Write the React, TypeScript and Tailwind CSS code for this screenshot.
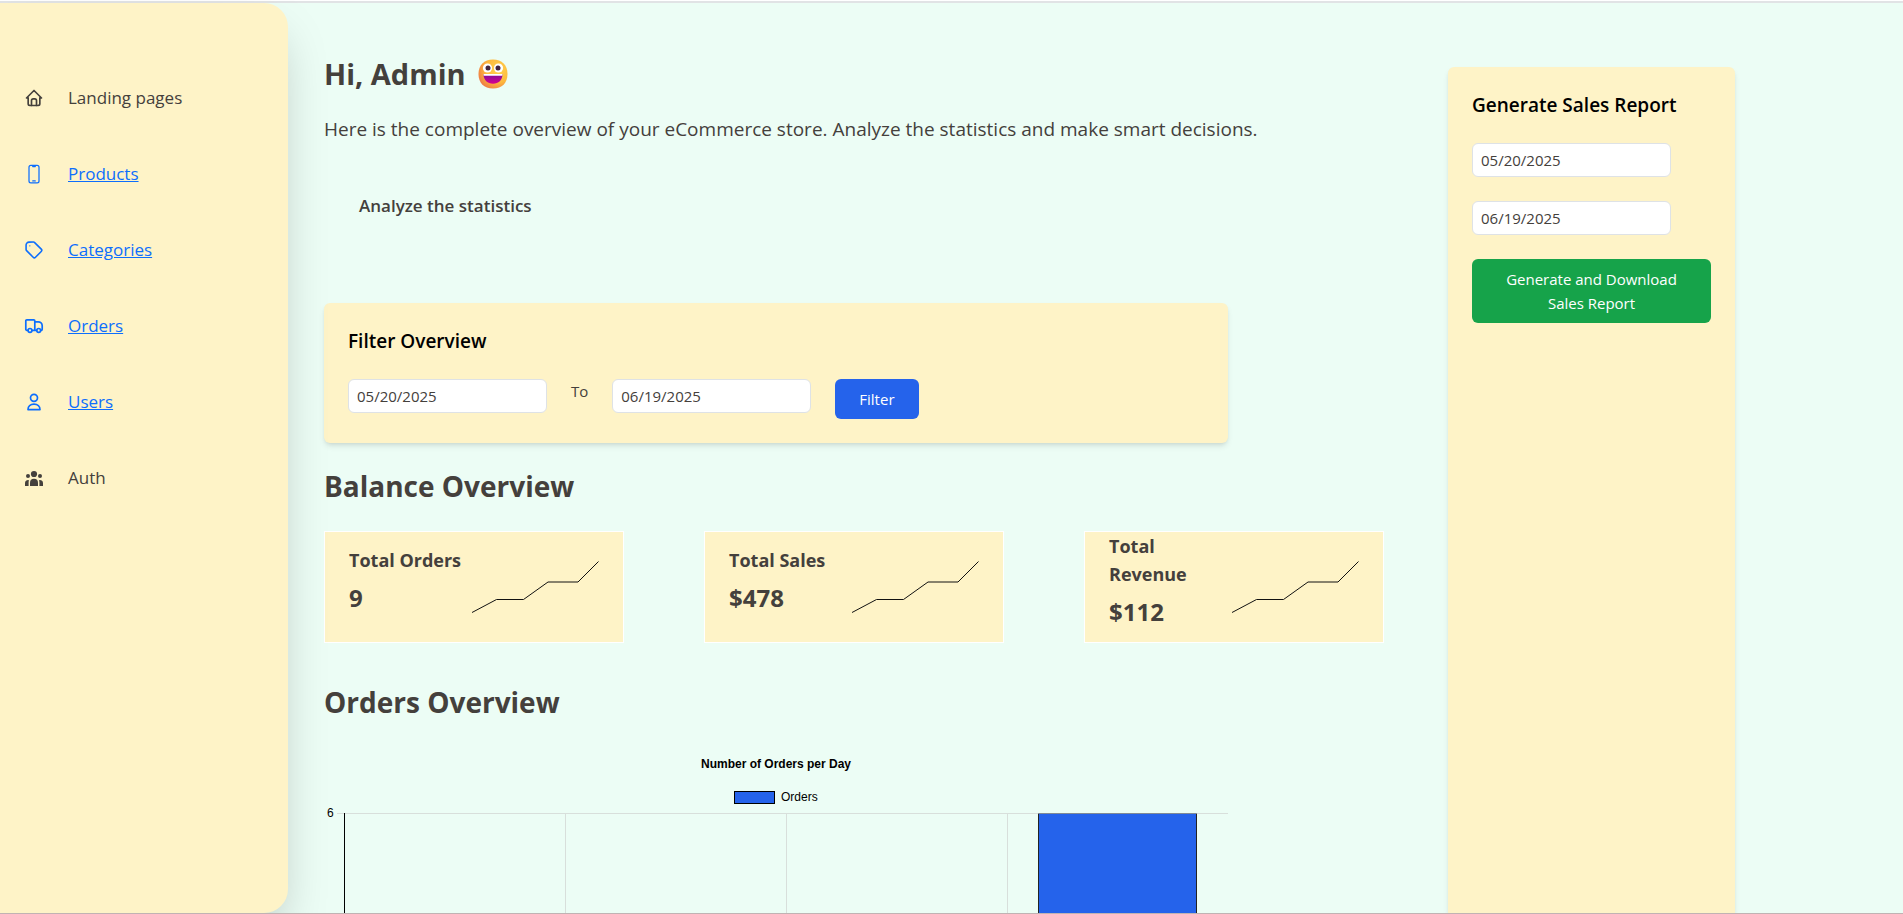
import type { ReactNode } from "react";
import { HiOutlineDevicePhoneMobile } from "react-icons/hi2";
import { TbHome } from "react-icons/tb";

const stroke = {
  fill: "none",
  stroke: "currentColor",
  strokeWidth: 1.5,
  strokeLinecap: "round",
  strokeLinejoin: "round",
} as const;

function TagIcon() {
  return (
    <svg viewBox="0 0 24 24" className="size-5" {...stroke} strokeWidth={1.9} aria-hidden="true">
      <path d="M2.500 6v5.400a2 2 0 0 0 .6 1.400l7.900 7.900a2 2 0 0 0 2.800 0l6.900-6.900a2 2 0 0 0 0-2.800l-7.900-7.900a2 2 0 0 0-1.400-.6H6A3.500 3.500 0 0 0 2.500 6z" />
      <path d="M7 7h.01" strokeWidth={1.600} />
    </svg>
  );
}

function TruckIcon() {
  return (
    <svg viewBox="0 0 20 20" className="size-5" {...stroke} strokeWidth={1.7} aria-hidden="true">
      <path d="M4 14.3H2.800a1 1 0 0 1-1-1V4.800a1 1 0 0 1 1-1h7a1 1 0 0 1 1 1v9.500M8 14.300h4.600" />
      <path d="M10.800 5.800h3.400a4 4 0 0 1 4 4v3.500a1 1 0 0 1-1 1h-.5" />
      <circle cx="6" cy="14.4" r="1.9" />
      <circle cx="14.7" cy="14.4" r="1.9" />
    </svg>
  );
}

function UserIcon() {
  return (
    <svg viewBox="0 0 20 20" className="size-5" {...stroke} strokeWidth={1.7} aria-hidden="true">
      <circle cx="10" cy="5.8" r="3.5" />
      <path d="M4 17.600c0-3.200 2.400-5.400 6-5.400s6 2.200 6 5.400z" />
    </svg>
  );
}

function TeamIcon() {
  return (
    <svg viewBox="0 0 20 20" className="size-5" fill="currentColor" aria-hidden="true">
      <circle cx="10" cy="6" r="3.1" />
      <circle cx="4" cy="7.9" r="2" />
      <circle cx="16" cy="7.9" r="2" />
      <path d="M6 18v-3.200a4 4 0 0 1 8 0V18z" />
      <path d="M1 18v-3a3 3 0 0 1 4-2.800c-.3.800-.4 1.600-.4 2.600V18zM19 18v-3a3 3 0 0 0-4-2.800c.3.800.4 1.600.4 2.600V18z" />
    </svg>
  );
}

function GrinEmoji() {
  return (
    <svg viewBox="0 0 30 30" className="size-[30px]" role="img" aria-label="Grinning face">
      <defs>
        <radialGradient id="face" cx="0.68" cy="0.35" r="0.75">
          <stop offset="0" stopColor="#ffd44f" />
          <stop offset="0.6" stopColor="#fdb83d" />
          <stop offset="1" stopColor="#ee7a45" />
        </radialGradient>
        <linearGradient id="mouth" x1="0" y1="0" x2="0" y2="1">
          <stop offset="0" stopColor="#7d0f9c" />
          <stop offset="1" stopColor="#d8008c" />
        </linearGradient>
      </defs>
      <path d="M15 .5C24 .5 29.500 6 29.500 15S24 29.500 15 29.500.5 24 .5 15 6 .5 15 .5z" fill="url(#face)" />
      <circle cx="9.5" cy="9" r="4.6" fill="#fff" />
      <circle cx="20.5" cy="9" r="4.6" fill="#fff" />
      <circle cx="10" cy="9" r="2.5" fill="#43263f" />
      <circle cx="20" cy="9" r="2.5" fill="#43263f" />
      <path d="M5.500 15h19c0 6-4 9.800-9.500 9.800S5.500 21 5.500 15z" fill="url(#mouth)" />
      <path d="M5.500 15h19l-.2 1.800H5.700z" fill="#fff" />
    </svg>
  );
}

function NavItem({ icon, label, href }: { icon: ReactNode; label: string; href?: string }) {
  if (href) {
    return (
      <li>
        <a href={href} className="flex items-center gap-6 text-[#0d6efd]">
          {icon}
          <span className="underline">{label}</span>
        </a>
      </li>
    );
  }
  return (
    <li>
      <button type="button" className="flex items-center gap-6">
        {icon}
        {label}
      </button>
    </li>
  );
}

function DateInput({ label, value }: { label: string; value: string }) {
  return (
    <input
      type="text"
      aria-label={label}
      defaultValue={value}
      className="h-[34px] w-[199px] rounded-md border border-[#dee2e6] bg-white px-2 text-[15px]"
    />
  );
}

function StatCard({ title, value }: { title: string; value: string }) {
  return (
    <div className="flex h-28 items-center justify-between border border-white bg-[#fef3c7] px-6">
      <div className="flex-1 pb-4 font-bold">
        <h3 className="text-[18px] leading-7">{title}</h3>
        <p className="mt-[10px] text-[24px] leading-7">{value}</p>
      </div>
      <svg viewBox="0 0 128 52" className="h-[52px] w-32 shrink-0" aria-hidden="true">
        <polyline points="1,51.5 25.5,38.5 52.5,38.5 77,21 107,21 127.5,.5" fill="none" stroke="#111" />
      </svg>
    </div>
  );
}

const verticalLines = [241.5, 462.5, 683.5];

function OrdersChart() {
  return (
    <svg viewBox="0 0 904 200" className="mt-6 block w-full max-w-[904px] font-['Liberation_Sans',sans-serif] text-[12px]">
      <text x="452" y="21" textAnchor="middle" className="font-bold">
        Number of Orders per Day
      </text>
      <rect x="410.5" y="44.5" width="40" height="12" fill="#2563eb" stroke="#000" />
      <text x="457" y="54">Orders</text>
      <text x="3" y="70">6</text>
      <path d="M13 66.5H904" stroke="#d8dfdb" />
      {verticalLines.map((x) => (
        <path key={x} d={`M${x} 67V200`} stroke="#d8dfdb" />
      ))}
      <path d="M20.5 66V200" stroke="#000" />
      <rect x="714.5" y="66.5" width="158" height="140" fill="#2563eb" stroke="#222" />
      <path d="M714 66.5H873" stroke="#808a96" />
    </svg>
  );
}

export default function App() {
  return (
    <div className="flex h-screen flex-col overflow-hidden border-b border-[#c0b3b3] bg-[#ecfdf5] font-['Open_Sans','Noto_Sans',sans-serif] text-[#44403c]">
      <div className="h-[3px] shrink-0 border-t border-white bg-[#e1e3e5]" />
      <div className="flex min-h-0 flex-1">
        <aside className="z-10 w-72 shrink-0 rounded-r-3xl bg-[#fef3c7] px-6 pt-[81px] shadow-2xl">
          <nav>
            <ul className="flex flex-col gap-12 text-[17px] leading-7">
              <NavItem icon={<TbHome className="size-5" />} label="Landing pages" />
              <NavItem icon={<HiOutlineDevicePhoneMobile className="size-5" />} label="Products" href="#products" />
              <NavItem icon={<TagIcon />} label="Categories" href="#categories" />
              <NavItem icon={<TruckIcon />} label="Orders" href="#orders" />
              <NavItem icon={<UserIcon />} label="Users" href="#users" />
              <NavItem icon={<TeamIcon />} label="Auth" />
            </ul>
          </nav>
        </aside>

        <div className="flex min-w-0 flex-1 gap-16 pl-9">
          <main className="max-w-[1060px] min-w-0 flex-1 pt-[51px]">
            <h1 className="flex items-center gap-3 text-[29px] leading-10 font-bold">
              Hi, Admin <GrinEmoji />
            </h1>
            <p className="mt-5 text-[19px] leading-[30px]">
              Here is the complete overview of your eCommerce store. Analyze the statistics and make smart decisions.
            </p>
            <p className="mt-12 px-[35px] text-[17px] leading-7 font-semibold">Analyze the statistics</p>

            <section className="mt-[83px] max-w-[904px] rounded-md bg-[#fef3c7] p-6 shadow-md">
              <h2 className="mb-6 text-[19px] leading-7 font-semibold text-black">Filter Overview</h2>
              <form className="flex items-start gap-6">
                <DateInput label="From date" value="05/20/2025" />
                <span className="text-[15px] leading-6">To</span>
                <DateInput label="To date" value="06/19/2025" />
                <button type="button" className="rounded-md bg-[#2563eb] px-6 py-2 text-[15px] leading-6 text-white">
                  Filter
                </button>
              </form>
            </section>

            <h2 className="mt-6 text-[28px] leading-[38px] font-bold">Balance Overview</h2>
            <div className="mt-[26px] grid grid-cols-3 gap-20">
              <StatCard title="Total Orders" value="9" />
              <StatCard title="Total Sales" value="$478" />
              <StatCard title="Total Revenue" value="$112" />
            </div>

            <h2 className="mt-10 mb-[26px] text-[28px] leading-[38px] font-bold">Orders Overview</h2>
            <OrdersChart />
          </main>

          <aside className="mt-16 w-[287px] shrink-0 rounded-t-md bg-[#fef3c7] p-6 shadow-md">
            <h2 className="mb-6 text-[19px] leading-7 font-semibold text-black">Generate Sales Report</h2>
            <form className="flex flex-col items-start gap-6">
              <DateInput label="Report start date" value="05/20/2025" />
              <DateInput label="Report end date" value="06/19/2025" />
              <button type="button" className="w-full rounded-md bg-[#16a34a] px-6 py-2 text-[15px] leading-6 text-white">
                Generate and Download Sales Report
              </button>
            </form>
          </aside>
        </div>
      </div>
    </div>
  );
}
